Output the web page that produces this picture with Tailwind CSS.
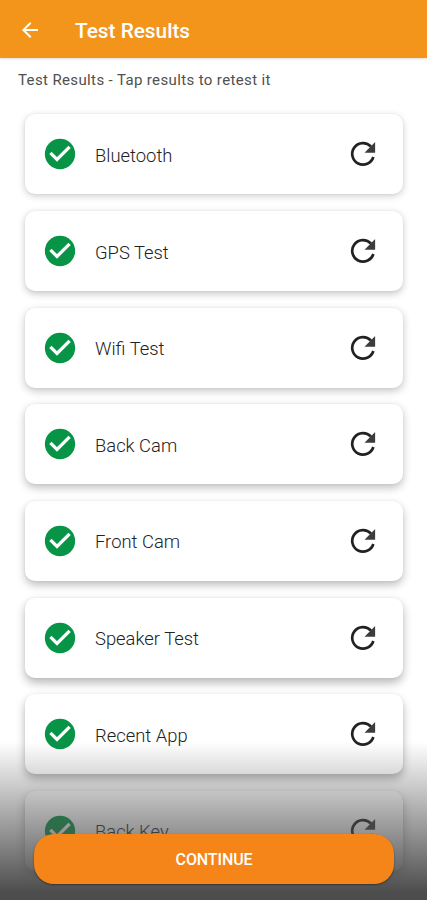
<!DOCTYPE html>
<html lang="en">
  <head>
    <meta charset="utf-8" />
    <title>Test Results</title>
    <script src="https://cdn.jsdelivr.net/npm/@tailwindcss/browser@4"></script>
  </head>
  <body class="bg-white font-[Roboto,sans-serif]">
    <div class="relative w-[427px] h-[900px] overflow-hidden">
      <header class="flex items-center h-[58px] pt-[2px] bg-[#f3951b] text-white shadow-[0_1px_2px_rgba(0,0,0,0.15)]">
        <svg class="ml-[18px] size-6" viewBox="0 0 24 24" fill="currentColor">
          <path d="M20 11H7.83l5.59-5.59L12 4l-8 8 8 8 1.41-1.41L7.83 13H20v-2z" />
        </svg>
        <h1 class="ml-[33px] pt-px text-[20.8px] leading-6 font-medium">Test Results</h1>
      </header>
      <p class="mt-[12px] ml-[18px] text-[15px] leading-5 tracking-[0.37px] text-[#505050]">Test Results - Tap results to retest it</p>

      <ul id="results" class="mt-[24.4px] mx-6 pl-px flex flex-col gap-[16.65px]"></ul>

      <!-- fade behind the button -->
      <div class="absolute inset-x-0 bottom-0 h-[158px] bg-linear-to-b from-[#4d4d4d]/0 to-[#4d4d4d] to-95%"></div>
      <button class="absolute left-[34px] top-[834px] w-[360px] h-[50px] pt-[2px] rounded-[20px] bg-[#f58518] text-white text-base font-medium tracking-[-0.1px] shadow-[0_1px_2px_rgba(0,0,0,0.4)]">CONTINUE</button>
    </div>

    <template id="row">
      <li class="flex items-center shrink-0 w-[378px] h-20 rounded-[10px] bg-white pl-[17px] pr-[22px]">
        <svg class="size-9" viewBox="0 0 24 24">
          <circle cx="12" cy="12" r="10.1" fill="#079447" />
          <path fill="none" stroke="#fff" stroke-width="2.2" d="M5.6 11.2L10 15.6L18.4 7.2" />
        </svg>
        <span class="ml-[17px] pt-[3px] flex-1 text-[18.4px] leading-6 font-light text-[#222]"></span>
        <svg class="size-9" viewBox="0 0 24 24">
          <path fill="none" stroke="#222" stroke-width="1.8" d="M17.3 7A7.2 7.2 0 1 0 18.9 14" />
          <path fill="#3c3c3c" d="M20.1 4v7.1H13z" />
        </svg>
      </li>
    </template>

    <script>
      const tests = ['Bluetooth', 'GPS Test', 'Wifi Test', 'Back Cam', 'Front Cam', 'Speaker Test', 'Recent App', 'Back Key'];
      const list = document.getElementById('results');
      const row = document.getElementById('row');

      tests.forEach((name, i) => {
        const item = row.content.cloneNode(true);
        item.querySelector('span').textContent = name;
        // shadows get longer further down the screen
        item.querySelector('li').style.boxShadow = `0 ${2 + i * 0.5}px ${7 + i * 0.5}px rgba(0,0,0,${0.2 + i * 0.015}), 0 0 3px rgba(0,0,0,0.05)`;
        list.appendChild(item);
      });
    </script>
  </body>
</html>
